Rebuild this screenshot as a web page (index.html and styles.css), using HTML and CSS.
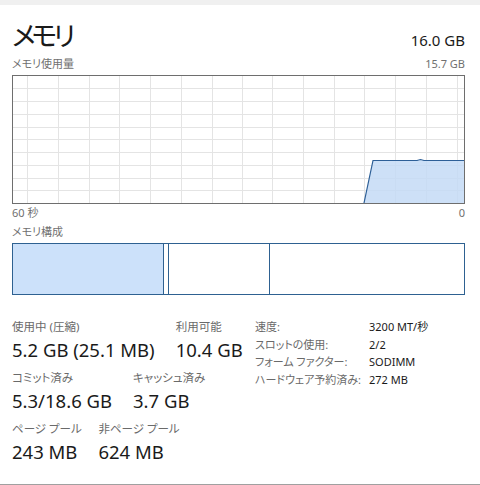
FILE: index.html
```html
<!DOCTYPE html>
<html lang="ja">
<head>
<meta charset="utf-8">
<link rel="stylesheet" href="styles.css">
</head>
<body>
<div class="topbar"></div>
<div class="panel">
  <div class="header">
    <div class="title">メモリ</div>
    <div class="total">16.0 GB</div>
  </div>
  <div class="caption-row">
    <span>メモリ使用量</span>
    <span>15.7 GB</span>
  </div>
  <div class="graph">
    <svg width="451" height="127" viewBox="0 0 451 127">
      <g class="grid">
        <line x1="14.5" y1="0" x2="14.5" y2="127"/>
        <line x1="45.5" y1="0" x2="45.5" y2="127"/>
        <line x1="76.5" y1="0" x2="76.5" y2="127"/>
        <line x1="106.5" y1="0" x2="106.5" y2="127"/>
        <line x1="137.5" y1="0" x2="137.5" y2="127"/>
        <line x1="168.5" y1="0" x2="168.5" y2="127"/>
        <line x1="199.5" y1="0" x2="199.5" y2="127"/>
        <line x1="229.5" y1="0" x2="229.5" y2="127"/>
        <line x1="259.5" y1="0" x2="259.5" y2="127"/>
        <line x1="290.5" y1="0" x2="290.5" y2="127"/>
        <line x1="321.5" y1="0" x2="321.5" y2="127"/>
        <line x1="351.5" y1="0" x2="351.5" y2="127"/>
        <line x1="382.5" y1="0" x2="382.5" y2="127"/>
        <line x1="413.5" y1="0" x2="413.5" y2="127"/>
        <line x1="444.5" y1="0" x2="444.5" y2="127"/>
        <line x1="0" y1="12.5" x2="451" y2="12.5"/>
        <line x1="0" y1="25.5" x2="451" y2="25.5"/>
        <line x1="0" y1="38.5" x2="451" y2="38.5"/>
        <line x1="0" y1="51.5" x2="451" y2="51.5"/>
        <line x1="0" y1="63.5" x2="451" y2="63.5"/>
        <line x1="0" y1="76.5" x2="451" y2="76.5"/>
        <line x1="0" y1="89.5" x2="451" y2="89.5"/>
        <line x1="0" y1="102.5" x2="451" y2="102.5"/>
        <line x1="0" y1="114.5" x2="451" y2="114.5"/>
      </g>
      <polygon class="area" points="351,127 360,84.5 404,84.5 407.5,83.5 411,84.5 451,84.5 451,127"/>
      <polyline class="edge" points="351,127 360,84.5 404,84.5 407.5,83.5 411,84.5 451,84.5"/>
    </svg>
  </div>
  <div class="caption-row axis">
    <span>60 秒</span>
    <span>0</span>
  </div>
  <div class="caption-row comp-label">
    <span>メモリ構成</span>
  </div>
  <div class="composition">
    <div class="seg seg-used" style="width:150px"></div>
    <div class="seg" style="width:4px"></div>
    <div class="seg" style="width:100px"></div>
    <div class="seg seg-rest"></div>
  </div>
  <div class="stats">
    <div class="left-stats">
      <div class="stat-row">
        <div class="stat"><div class="label">使用中 (圧縮)</div><div class="value">5.2 GB (25.1 MB)</div></div>
        <div class="stat"><div class="label">利用可能</div><div class="value">10.4 GB</div></div>
      </div>
      <div class="stat-row">
        <div class="stat"><div class="label">コミット済み</div><div class="value">5.3/18.6 GB</div></div>
        <div class="stat"><div class="label">キャッシュ済み</div><div class="value">3.7 GB</div></div>
      </div>
      <div class="stat-row">
        <div class="stat"><div class="label">ページ プール</div><div class="value">243 MB</div></div>
        <div class="stat"><div class="label">非ページ プール</div><div class="value">624 MB</div></div>
      </div>
    </div>
    <dl class="details">
      <dt>速度:</dt><dd>3200 MT/秒</dd>
      <dt>スロットの使用:</dt><dd>2/2</dd>
      <dt>フォーム ファクター:</dt><dd>SODIMM</dd>
      <dt>ハードウェア予約済み:</dt><dd>272 MB</dd>
    </dl>
  </div>
</div>
<div class="bottom-line"></div>
</body>
</html>
```

FILE: styles.css
```css
html, body {
  margin: 0;
  padding: 0;
  background: #ffffff;
}
body {
  width: 480px;
  height: 485px;
  position: relative;
  overflow: hidden;
  font-family: "Noto Sans", "Noto Sans CJK JP", sans-serif;
  font-feature-settings: "palt";
  color: #1a1a1a;
}
.topbar {
  height: 5px;
  background: #f0f0f0;
}
.panel {
  padding: 0 15px 0 12px;
}
.header {
  display: flex;
  justify-content: space-between;
  align-items: baseline;
  margin-top: 12px;
  height: 36px;
}
.title {
  font-family: "Noto Sans CJK JP", sans-serif;
  font-size: 27px;
  line-height: 36px;
  letter-spacing: -4px;
}
.total {
  font-size: 15px;
  line-height: 36px;
}
.caption-row {
  display: flex;
  justify-content: space-between;
  font-size: 11px;
  line-height: 22px;
  height: 22px;
  color: #707070;
}
.axis {
  height: 18px;
  line-height: 18px;
}
.comp-label {
  height: 21px;
  line-height: 20px;
}
.graph {
  box-sizing: border-box;
  height: 129px;
  border: 1px solid #6e6e6e;
}
.graph svg {
  display: block;
}
.grid line {
  stroke: #e4e4e4;
  stroke-width: 1;
}
.area {
  fill: #c4dbf6;
  fill-opacity: 0.85;
}
.edge {
  fill: none;
  stroke: #2d5f97;
  stroke-width: 1.2;
}
.composition {
  box-sizing: border-box;
  display: flex;
  height: 52px;
  border: 1px solid #2e6191;
}
.seg {
  flex: none;
  background: #ffffff;
}
.seg + .seg {
  border-left: 1px solid #2e6191;
}
.seg-used {
  background: #cce1fa;
}
.seg-rest {
  flex: 1;
}
.stats {
  display: flex;
  padding-top: 23px;
}
.left-stats {
  width: 243px;
}
.stat-row {
  display: flex;
  gap: 21px;
  height: 51px;
}
.label {
  width: 0;
  min-width: 100%;
  white-space: nowrap;
  font-size: 11.5px;
  line-height: 18px;
  color: #6a6a6a;
}
.value {
  white-space: nowrap;
  font-size: 18.5px;
  line-height: 28px;
  color: #1a1a1a;
}
.details {
  display: grid;
  grid-template-columns: 114px auto;
  grid-auto-rows: 17.7px;
  margin: 0;
  font-size: 11px;
  line-height: 17.7px;
}
.details dt {
  color: #6a6a6a;
}
.details dd {
  margin: 0;
  color: #1a1a1a;
}
.bottom-line {
  position: absolute;
  left: 0;
  right: 0;
  bottom: 0;
  height: 1px;
  background: #a0a0a0;
}
```
